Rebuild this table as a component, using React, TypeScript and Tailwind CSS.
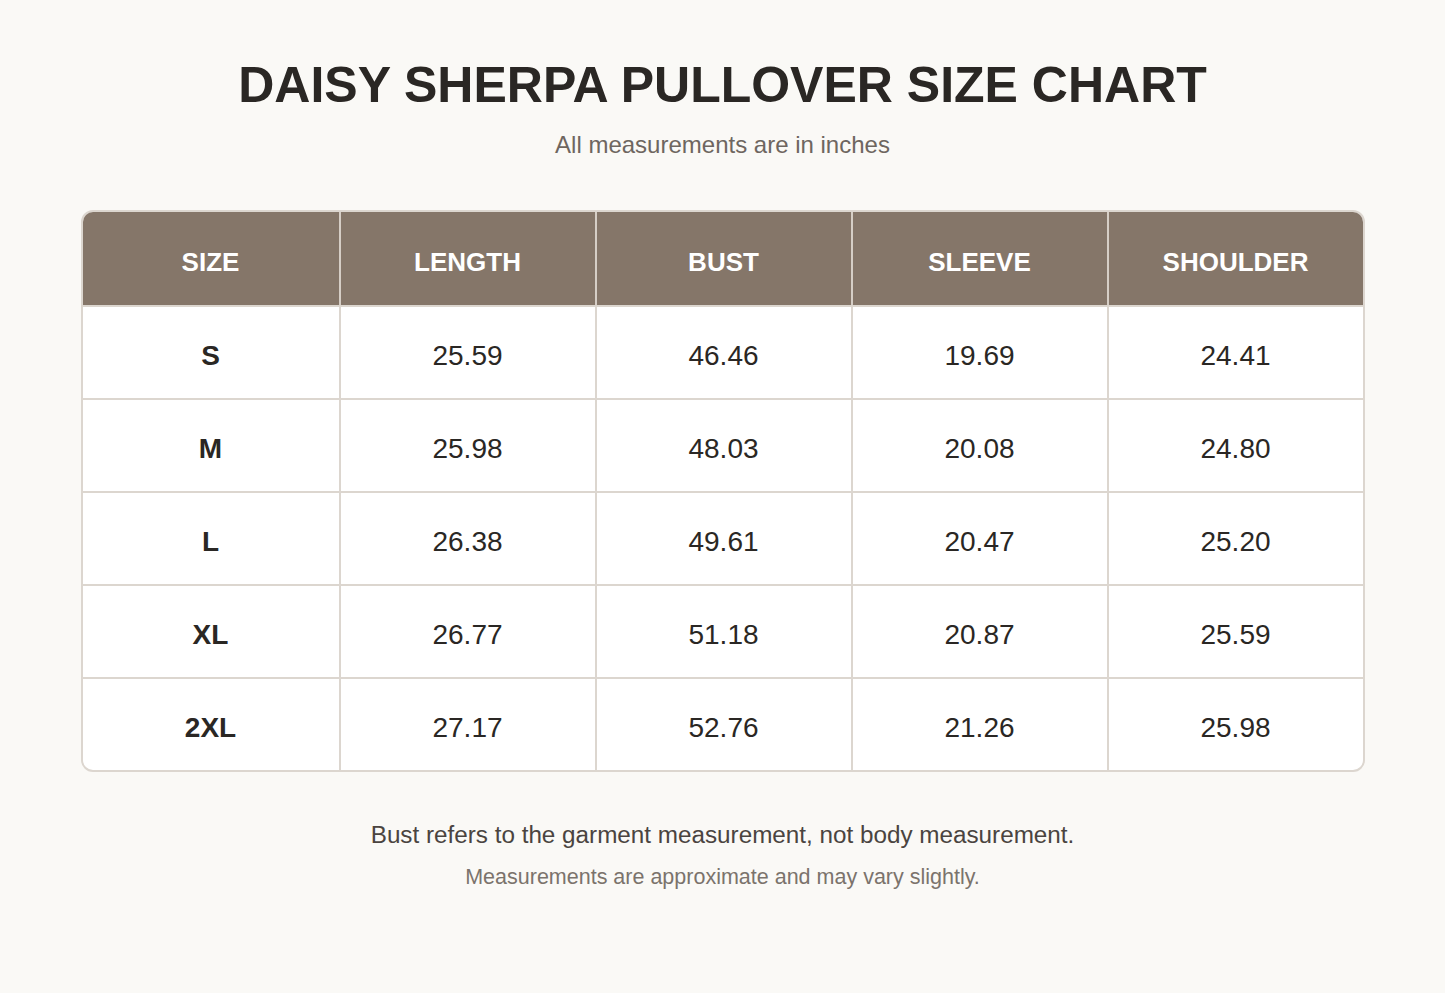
const headers = ['SIZE', 'LENGTH', 'BUST', 'SLEEVE', 'SHOULDER']

const rows = [
  ['S', '25.59', '46.46', '19.69', '24.41'],
  ['M', '25.98', '48.03', '20.08', '24.80'],
  ['L', '26.38', '49.61', '20.47', '25.20'],
  ['XL', '26.77', '51.18', '20.87', '25.59'],
  ['2XL', '27.17', '52.76', '21.26', '25.98'],
]

export default function App() {
  return (
    <div
      className="min-h-[993px] w-full bg-[#faf9f6] pt-[55px] text-[#2a2724]"
      style={{ fontFamily: '"Liberation Sans", Arial, Helvetica, sans-serif' }}
    >
      <h1 className="text-center text-[50px] font-bold leading-[60px]">
        DAISY SHERPA PULLOVER SIZE CHART
      </h1>
      <p className="mt-[14px] text-center text-[24px] leading-[32px] text-[#6e6660]">
        All measurements are in inches
      </p>

      <div className="mx-auto mt-[49px] w-[1284px] overflow-hidden rounded-[12px] border-2 border-[#dcd6cf] bg-white">
        <div className="grid h-[95px] grid-cols-5 border-b-2 border-[#dcd6cf] bg-[#857669]">
          {headers.map((h, i) => (
            <div
              key={h}
              className={`flex items-center justify-center pt-[7px] text-[26px] font-bold text-white ${i > 0 ? 'border-l-2 border-[#d6cec6]' : ''}`}
            >
              {h}
            </div>
          ))}
        </div>

        {rows.map((row, r) => (
          <div
            key={row[0]}
            className={`grid h-[91px] grid-cols-5 ${r < rows.length - 1 ? 'box-content border-b-2 border-[#dcd6cf]' : ''}`}
          >
            {row.map((cell, i) => (
              <div
                key={i}
                className={`flex items-center justify-center pt-[6px] text-[28px] ${i === 0 ? 'font-bold' : 'border-l-2 border-[#dcd6cf]'}`}
              >
                {cell}
              </div>
            ))}
          </div>
        ))}
      </div>

      <p className="mt-[47px] text-center text-[24.25px] leading-[32px] text-[#4a4440]">
        Bust refers to the garment measurement, not body measurement.
      </p>
      <p className="mt-[12px] text-center text-[21.5px] leading-[28px] text-[#7b736c]">
        Measurements are approximate and may vary slightly.
      </p>
    </div>
  )
}
